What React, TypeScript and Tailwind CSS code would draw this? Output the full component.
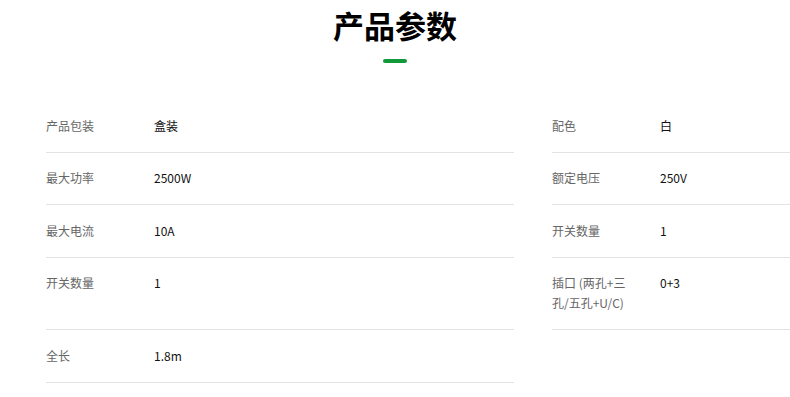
import React from 'react';

type Spec = { label: string; value: string };

const leftSpecs: Spec[] = [
  { label: '产品包装', value: '盒装' },
  { label: '最大功率', value: '2500W' },
  { label: '最大电流', value: '10A' },
  { label: '开关数量', value: '1' },
  { label: '全长', value: '1.8m' },
];

const rightSpecs: Spec[] = [
  { label: '配色', value: '白' },
  { label: '额定电压', value: '250V' },
  { label: '开关数量', value: '1' },
  { label: '插口 (两孔+三孔/五孔+U/C)', value: '0+3' },
];

const SpecCell = ({ spec }: { spec?: Spec }) => {
  if (!spec) return <div />;
  return (
    <div className="flex items-start py-[15.75px] border-b border-[#e3e3e3] text-[12px] leading-5">
      <span className="w-[80px] mr-[28px] shrink-0 text-[#666]">{spec.label}</span>
      <span className="text-[#111]">{spec.value}</span>
    </div>
  );
};

const App = () => {
  const rows = Math.max(leftSpecs.length, rightSpecs.length);

  return (
    <div
      className="w-[790px] h-[397px] overflow-hidden bg-white"
      style={{ fontFamily: '"Noto Sans CJK SC", "Noto Sans", sans-serif' }}
    >
      <div className="flex flex-col items-center pt-[5px]">
        <h1 className="text-[31px] leading-[40px] font-bold text-black">产品参数</h1>
        <div className="mt-[14px] w-[24px] h-[4px] rounded-full bg-[#12993b]" />
      </div>

      <div className="mt-[37px] pl-[46px] grid grid-cols-[468px_1fr] gap-x-[38px]">
        {Array.from({ length: rows }).map((_, i) => (
          <React.Fragment key={i}>
            <SpecCell spec={leftSpecs[i]} />
            <SpecCell spec={rightSpecs[i]} />
          </React.Fragment>
        ))}
      </div>
    </div>
  );
};

export default App;
